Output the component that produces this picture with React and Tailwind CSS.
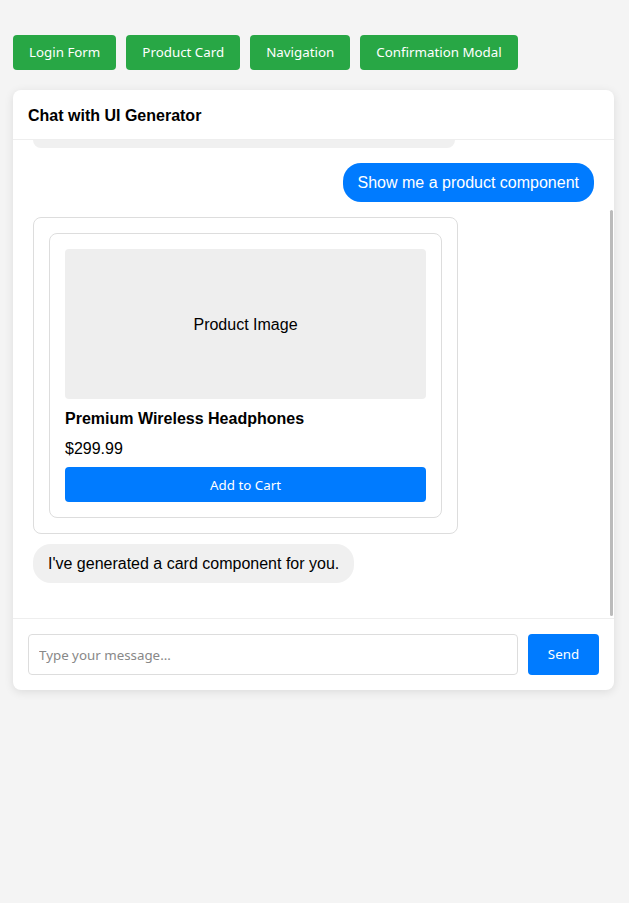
import React from 'react';

const TEMPLATES = ['Login Form', 'Product Card', 'Navigation', 'Confirmation Modal'];

function ProductCard() {
  return (
    <div className="rounded-lg border border-[#ddd] bg-white p-[15px]">
      {/* Заглушка картинки */}
      <div className="flex h-[150px] items-center justify-center rounded bg-[#eee] pt-[2px] text-[16px] text-black">
        Product Image
      </div>
      <h3 className="mt-[11px] text-[16px] font-bold leading-[18px] text-black">
        Premium Wireless Headphones
      </h3>
      <p className="mt-[12px] text-[16px] leading-[18px] text-black">$299.99</p>
      <button className="mt-[9px] h-[35px] w-full rounded bg-[#007bff] pt-[2px] text-[13.333px] text-white font-['Noto_Sans',sans-serif]">
        Add to Cart
      </button>
    </div>
  );
}

export default function App() {
  return (
    <div className="min-h-[903px] bg-[#f4f4f4] px-[13px] pt-[35px] font-['Liberation_Sans',Arial,sans-serif]">
      {/* Кнопки шаблонов */}
      <div className="flex gap-[10px]">
        {TEMPLATES.map((t) => (
          <button
            key={t}
            className="h-[35px] rounded bg-[#28a745] px-[16px] text-[13.333px] text-white font-['Noto_Sans',sans-serif]"
          >
            {t}
          </button>
        ))}
      </div>

      {/* Окно чата */}
      <div className="mt-[20px] w-[601px] overflow-hidden rounded-lg bg-white shadow-[0_2px_10px_rgba(0,0,0,0.1)]">
        <div className="flex h-[50px] items-center border-b border-[#eee] px-[15px] pt-[2px]">
          <h2 className="text-[16px] font-bold text-black">Chat with UI Generator</h2>
        </div>

        <div className="relative h-[478px] overflow-hidden px-[20px]">
          {/* хвост предыдущего сообщения */}
          <div className="h-[8px] w-[422px] rounded-b-[18px] bg-[#f0f0f0]" />

          <div className="mt-[15px] flex justify-end">
            <div className="rounded-[18px] bg-[#007bff] px-[15px] py-[10px] text-[16px] leading-[19px] text-white">
              Show me a product component
            </div>
          </div>

          <div className="mt-[15px] w-[425px] rounded-lg border border-[#ddd] p-[15px]">
            <ProductCard />
          </div>

          <div className="mt-[10px] inline-block rounded-[18px] bg-[#f0f0f0] px-[15px] py-[10px] text-[16px] leading-[19px] text-black">
            I've generated a card component for you.
          </div>

          {/* полоса прокрутки */}
          <div className="absolute right-[1px] top-[70px] h-[406px] w-[3px] rounded-full bg-[#bbb]" />
        </div>

        <div className="flex gap-[10px] border-t border-[#eee] p-[15px]">
          <input
            className="h-[41px] flex-1 rounded border border-[#ddd] px-[10px] text-[13.333px] outline-none placeholder:text-[#888] font-['Noto_Sans',sans-serif]"
            placeholder="Type your message..."
          />
          <button className="h-[41px] w-[71px] rounded bg-[#007bff] text-[13.333px] text-white font-['Noto_Sans',sans-serif]">
            Send
          </button>
        </div>
      </div>
    </div>
  );
}
